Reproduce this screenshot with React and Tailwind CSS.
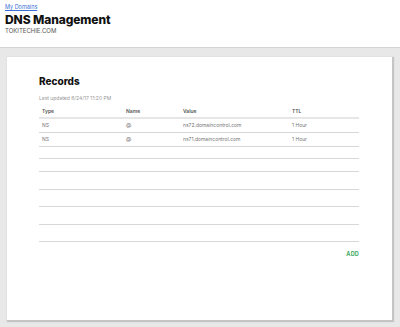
import React from "react";

const rows = [
  { type: "NS", name: "@", value: "ns72.domaincontrol.com", ttl: "1 Hour", h: "h-[14px]" },
  { type: "NS", name: "@", value: "ns71.domaincontrol.com", ttl: "1 Hour", h: "h-[14px]" },
  { h: "h-[12px]" },
  { h: "h-[13px]" },
  { h: "h-[18px]" },
  { h: "h-[17px]" },
  { h: "h-[18px]" },
  { h: "h-[17px]" },
];

export default function App() {
  return (
    <div className="w-[400px] h-[327px] bg-[#e8e8e8] overflow-hidden font-['Inter',_'Liberation_Sans',_sans-serif]">
      <div className="h-[48px] bg-white border-b border-[#d4d4d4] pl-[5px] pt-[4px]">
        <a className="block text-[5.5px] leading-[7px] text-[#3b6fd8] underline">My Domains</a>
        <div className="text-[12px] leading-[16px] font-extrabold text-[#111] tracking-[-0.1px] mt-[1px]">DNS Management</div>
        <div className="text-[6px] leading-[7px] text-[#555] -mt-[1px]">TOKITECHIE.COM</div>
      </div>
      <div className="pt-[9px] pl-[7px]">
        <div className="w-[385px] h-[263px] bg-white shadow-[1px_1px_1px_1px_rgba(0,0,0,0.15)] pl-[32px] pr-[33px] pt-[18px]">
          <div className="text-[10px] leading-[13px] font-extrabold text-[#111]">Records</div>
          <div className="text-[5px] leading-[6px] text-[#999] mt-[7px]">Last updated 6/24/17 11:20 PM</div>
          <div className="mt-[6px]">
            <div className="flex items-center h-[12px] border-b-2 border-[#e6e6e6] text-[5px] text-[#555] font-semibold">
              <div className="w-[87px] pl-[3px]">Type</div>
              <div className="w-[57px]">Name</div>
              <div className="w-[109px]">Value</div>
              <div>TTL</div>
            </div>
            {rows.map((r, i) => (
              <div key={i} className={`flex items-center ${r.h} border-b border-[#d8d8d8] text-[5px] text-[#777]`}>
                <div className="w-[87px] pl-[3px]">{r.type}</div>
                <div className="w-[57px] text-[5.5px]">{r.name}</div>
                <div className="w-[109px]">{r.value}</div>
                <div>{r.ttl}</div>
              </div>
            ))}
          </div>
          <div className="flex justify-end mt-[8px]">
            <span className="text-[5.5px] font-bold text-[#3aaa5e] tracking-[0.2px]">ADD</span>
          </div>
        </div>
      </div>
    </div>
  );
}
